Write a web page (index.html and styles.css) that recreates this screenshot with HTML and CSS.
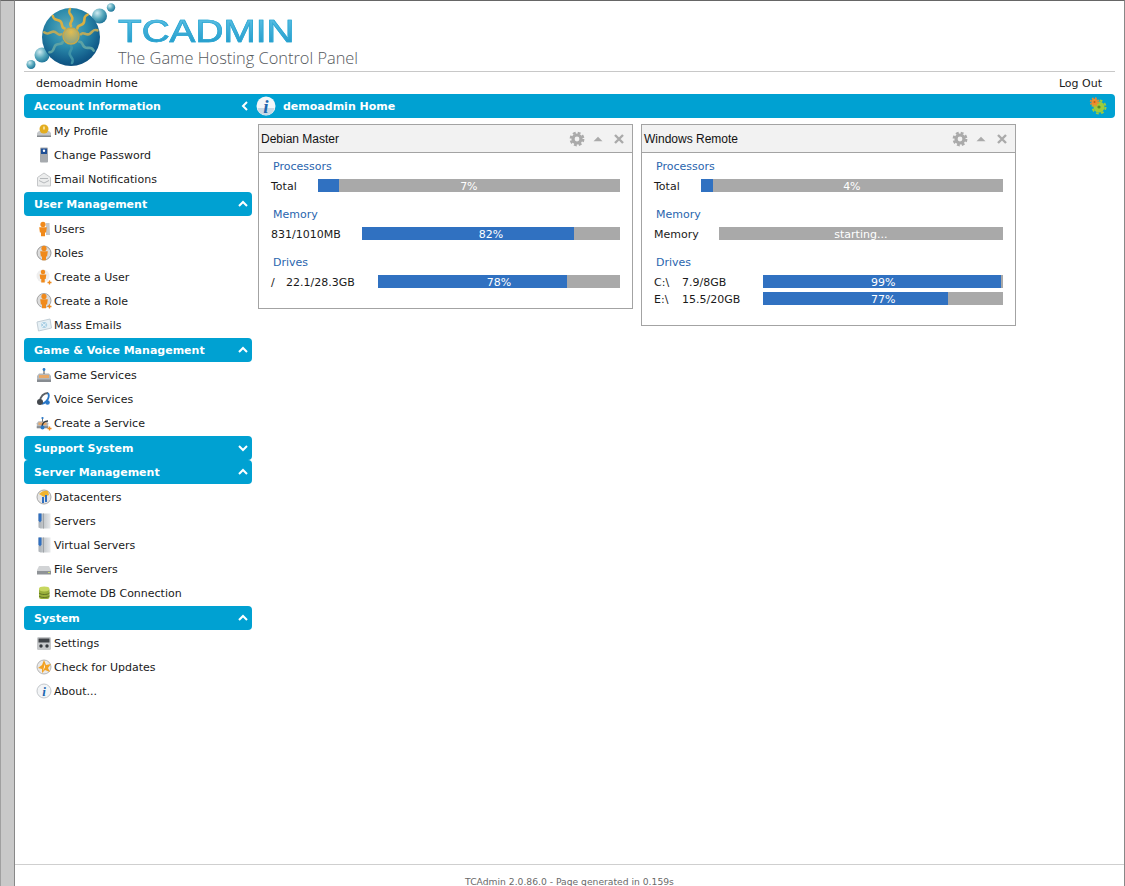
FILE: index.html
```html
<!DOCTYPE html>
<html lang="en">
<head>
<meta charset="utf-8">
<title>demoadmin Home</title>
<link rel="stylesheet" href="styles.css">
</head>
<body>
<svg class="defs" width="0" height="0" aria-hidden="true">
  <defs>
    <radialGradient id="sphere" cx="45%" cy="35%" r="72%">
      <stop offset="0" stop-color="#62aebc"/>
      <stop offset=".45" stop-color="#2b8aab"/>
      <stop offset=".8" stop-color="#125c8a"/>
      <stop offset="1" stop-color="#0a4674"/>
    </radialGradient>
    <radialGradient id="bubble" cx="35%" cy="30%" r="80%">
      <stop offset="0" stop-color="#cfeaf0"/>
      <stop offset=".5" stop-color="#57a8bc"/>
      <stop offset="1" stop-color="#136a92"/>
    </radialGradient>
    <radialGradient id="sun" cx="50%" cy="25%" r="80%">
      <stop offset="0" stop-color="#e2bd50"/>
      <stop offset="1" stop-color="#7fa08a"/>
    </radialGradient>
    <linearGradient id="tower" x1="0" x2="1">
      <stop offset="0" stop-color="#aab0b5"/>
      <stop offset="1" stop-color="#e8eaec"/>
    </linearGradient>
    <path id="ray" d="M0-10c-3-3 3-5 1-9s-4-4-2-8" fill="none" stroke-width="2.600" stroke-linecap="round"/>
    <symbol id="person" viewBox="0 0 16 16">
      <circle cx="8" cy="3.400" r="2.600" fill="#f08a1c"/>
      <path d="M4.200 6.200h7.600l-.7 5.300H10v3.800H6v-3.800H4.900z" fill="#f08a1c"/>
    </symbol>
    <symbol id="plus" viewBox="0 0 16 16">
      <path d="M11.500 13.500h4M13.500 11.500v4" stroke="#f08a1c" stroke-width="1.300" fill="none"/>
    </symbol>
    <symbol id="console" viewBox="0 0 16 16">
      <path d="M1 9 3 6.500h10L15 9v6H1z" fill="#b4b8bc"/>
      <rect x="3" y="8" width="10" height="3" fill="#e8a868"/>
      <rect x="1" y="12.500" width="14" height="2.500" fill="#878c91"/>
      <path d="M8 7V3" stroke="#555" stroke-width="1"/>
      <circle cx="8" cy="2.500" r="1.400" fill="#2a78c8"/>
    </symbol>
    <symbol id="server" viewBox="0 0 16 16">
      <path d="M2.500.5h12v15H4.500l-2-1z" fill="url(#tower)"/>
      <path d="M2.500.5h3v7L4 9.500 2.500 7.500z" fill="#2f6fc0"/>
      <path d="M7.500.5v15" stroke="#a0a4a8" stroke-width="1"/>
    </symbol>
  </defs>
</svg>

<div class="frame">
  <div class="strip"></div>
  <div class="page">
    <div class="wrap">
      <header class="masthead">
        <svg class="logo" width="94" height="70" viewBox="0 0 94 70" aria-hidden="true">
          <circle cx="75.500" cy="15" r="7.500" fill="url(#bubble)"/>
          <circle cx="87" cy="6.500" r="4.200" fill="url(#bubble)"/>
          <circle cx="18" cy="54" r="7.500" fill="url(#bubble)"/>
          <circle cx="7" cy="63.500" r="4.500" fill="url(#bubble)"/>
          <circle cx="47" cy="36" r="29" fill="url(#sphere)"/>
          <g transform="translate(47 35)">
            <use href="#ray" stroke="#d8b044"/>
            <use href="#ray" stroke="#d8b044" transform="rotate(40)"/>
            <use href="#ray" stroke="#b9a95c" transform="rotate(80)"/>
            <use href="#ray" stroke="#5ea2a4" transform="rotate(125)"/>
            <use href="#ray" stroke="#3f93a8" transform="rotate(180)"/>
            <use href="#ray" stroke="#5ea2a4" transform="rotate(235)"/>
            <use href="#ray" stroke="#b9a95c" transform="rotate(280)"/>
            <use href="#ray" stroke="#d8b044" transform="rotate(320)"/>
          </g>
          <circle cx="47" cy="35" r="8" fill="url(#sun)" stroke="#c8a848" stroke-width="1.400"/>
        </svg>
        <div class="brand">
          <div class="brand-name">TCADMIN</div>
          <div class="brand-tag">The Game Hosting Control Panel</div>
        </div>
      </header>

      <div class="crumbs">
        <span>demoadmin Home</span>
        <a class="logout">Log Out</a>
      </div>

      <div class="layout">
        <nav class="sidebar">
          <div class="section-head first">Account Information
            <svg class="chev" width="10" height="10" viewBox="0 0 10 10"><path d="M7 1 3 5l4 4" class="chev-line"/></svg>
          </div>
          <ul class="items">
            <li><svg class="ico" viewBox="0 0 16 16"><path d="M1 10 3 8h10l2 2v4H1z" fill="#c3c6c9"/><rect x="1" y="12.500" width="14" height="1.500" fill="#85898d"/><circle cx="8" cy="6" r="4.500" fill="#e3ad20"/><path d="M8 3.500v3" stroke="#fff3c0" stroke-width="1.400"/></svg>My Profile</li>
            <li><svg class="ico" viewBox="0 0 16 16"><rect x="4" y=".5" width="8" height="15" rx="1" fill="#a6aaae"/><rect x="5" y="1.500" width="6" height="5.500" fill="#1e4f96"/><circle cx="8" cy="3.800" r="1.200" fill="#fff"/></svg>Change Password</li>
            <li><svg class="ico" viewBox="0 0 16 16"><path d="M1.500 6.500 8 2l6.500 4.500V15h-13z" fill="#eceded" stroke="#c5c7c9"/><path d="M3 9.500 8 12l5-2.500M4 7.500h8" stroke="#b5b8bb" fill="none"/></svg>Email Notifications</li>
          </ul>

          <div class="section-head">User Management
            <svg class="chev" width="10" height="10" viewBox="0 0 10 10"><path d="M1 7l4-4 4 4" class="chev-line"/></svg>
          </div>
          <ul class="items">
            <li><svg class="ico" viewBox="0 0 16 16"><path d="M10 2h3.500l.5 12h-4z" fill="#c5c8cb"/><use href="#person" width="16" height="16" x="-1"/></svg>Users</li>
            <li><svg class="ico" viewBox="0 0 16 16"><circle cx="8" cy="8" r="7" fill="#dcdcdc" stroke="#9a9a9a"/><use href="#person" width="16" height="16"/></svg>Roles</li>
            <li><svg class="ico" viewBox="0 0 16 16"><circle cx="7" cy="7" r="6.500" fill="#eeeeee"/><use href="#person" width="14" height="14"/><use href="#plus" width="16" height="16"/></svg>Create a User</li>
            <li><svg class="ico" viewBox="0 0 16 16"><circle cx="8" cy="7.500" r="7" fill="#dcdcdc" stroke="#a5a5a5"/><use href="#person" width="16" height="16"/><use href="#plus" width="16" height="16"/></svg>Create a Role</li>
            <li><svg class="ico" viewBox="0 0 16 16"><path d="M1 5 14 2l1.500 9L2.500 14z" fill="#e6f0f5" stroke="#c2ced6"/><circle cx="8.200" cy="8" r="3" fill="#a9cfe4"/><path d="M6 6l4.500 4M10.500 6 6 10" stroke="#eef6fa"/></svg>Mass Emails</li>
          </ul>

          <div class="section-head">Game &amp; Voice Management
            <svg class="chev" width="10" height="10" viewBox="0 0 10 10"><path d="M1 7l4-4 4 4" class="chev-line"/></svg>
          </div>
          <ul class="items">
            <li><svg class="ico"><use href="#console" width="16" height="16"/></svg>Game Services</li>
            <li><svg class="ico" viewBox="0 0 16 16"><path d="M4 11c0-6 4-9 8-9" fill="none" stroke="#5c6166" stroke-width="1.800"/><path d="M12 2c2 3 0 9-6 11" fill="none" stroke="#2a78c8" stroke-width="1.800"/><circle cx="4" cy="11" r="3" fill="#44494e"/><circle cx="11.500" cy="11.500" r="2.300" fill="#2a78c8"/></svg>Voice Services</li>
            <li><svg class="ico" viewBox="0 0 16 16"><use href="#console" width="13" height="13" y="1"/><path d="M6 12c0-4 3-6 6-6" fill="none" stroke="#33383d" stroke-width="1.600"/><circle cx="6.500" cy="12.500" r="2" fill="#2a78c8"/><use href="#plus" width="16" height="16"/></svg>Create a Service</li>
          </ul>

          <div class="section-head">Support System
            <svg class="chev" width="10" height="10" viewBox="0 0 10 10"><path d="M1 3l4 4 4-4" class="chev-line"/></svg>
          </div>
          <div class="section-head">Server Management
            <svg class="chev" width="10" height="10" viewBox="0 0 10 10"><path d="M1 7l4-4 4 4" class="chev-line"/></svg>
          </div>
          <ul class="items">
            <li><svg class="ico" viewBox="0 0 16 16"><circle cx="8" cy="8" r="7" fill="#e4e4e4" stroke="#a8a8a8"/><path d="M3 5c3-3 6-4 9-3l1 4-5 2z" fill="#efb32e"/><path d="M6 8h2v6H6zM9 6h2v7H9z" fill="#2f6fc0"/></svg>Datacenters</li>
            <li><svg class="ico"><use href="#server" width="16" height="16"/></svg>Servers</li>
            <li><svg class="ico"><use href="#server" width="16" height="16"/></svg>Virtual Servers</li>
            <li><svg class="ico" viewBox="0 0 16 16"><path d="M3 5h10l2 4v4H1V9z" fill="#d2d4d6"/><rect x="1" y="10" width="14" height="3.500" fill="#8f9397"/><rect x="12" y="11" width="2" height="1" fill="#cfe06a"/></svg>File Servers</li>
            <li><svg class="ico" viewBox="0 0 16 16"><rect x="3" y="3" width="10.500" height="11" rx="2" fill="#9ab03a"/><ellipse cx="8.200" cy="4" rx="5.200" ry="2.400" fill="#c7d75f"/><path d="M3 8c2 2 8.500 2 10.500 0M3 11c2 2 8.500 2 10.500 0" stroke="#5f7222" fill="none"/></svg>Remote DB Connection</li>
          </ul>

          <div class="section-head">System
            <svg class="chev" width="10" height="10" viewBox="0 0 10 10"><path d="M1 7l4-4 4 4" class="chev-line"/></svg>
          </div>
          <ul class="items">
            <li><svg class="ico" viewBox="0 0 16 16"><rect x="1" y="2" width="14" height="13" rx="1.500" fill="#c6c8ca"/><rect x="2.500" y="3.500" width="11" height="4" fill="#3f4347"/><circle cx="5" cy="11" r="1.700" fill="#35393d"/><circle cx="11" cy="11" r="1.700" fill="#35393d"/></svg>Settings</li>
            <li><svg class="ico" viewBox="0 0 16 16"><circle cx="8" cy="8" r="7" fill="#e9e9e9" stroke="#b5b5b5"/><path d="M8 1 10 6l5-1-3 4 2 4-5-2-3 3V10L2 9l4-3z" fill="#f2a122"/><path d="M8 5l1 3-2 4 1-4z" fill="#fff"/></svg>Check for Updates</li>
            <li><svg class="ico" viewBox="0 0 16 16"><circle cx="8" cy="8" r="7" fill="#f2f4f6" stroke="#c4c8cc"/><text class="ico-i" x="8" y="12.500" text-anchor="middle">i</text></svg>About...</li>
          </ul>
        </nav>

        <main class="content">
          <div class="page-bar">
            <svg class="info" width="22" height="22" viewBox="0 0 22 22"><circle cx="11" cy="11" r="9.500" fill="#f4f7f9"/><path d="M2.500 13a8.600 8.600 0 0 0 17 0z" fill="#c8d8e4"/><text class="info-i" x="11" y="17.500" text-anchor="middle">i</text></svg>
            <span class="page-title">demoadmin Home</span>
            <svg class="puzzle" width="20" height="20" viewBox="0 0 20 20">
              <circle cx="11" cy="11" r="5.500" fill="#9ccc3c"/>
              <circle cx="11" cy="11" r="6.500" fill="none" stroke="#9ccc3c" stroke-width="2" stroke-dasharray="2.700 2.400"/>
              <circle cx="11" cy="11" r="1.600" fill="#5d8a2a"/>
              <circle cx="6.500" cy="6" r="3.200" fill="#f08a2c"/>
              <circle cx="6.500" cy="6" r="4" fill="none" stroke="#f08a2c" stroke-width="1.400" stroke-dasharray="1.800 1.340"/>
              <circle cx="6.500" cy="6" r="1" fill="#b8621a"/>
            </svg>
          </div>

          <div class="widgets">
            <section class="widget">
              <div class="widget-head">
                <span class="widget-title">Debian Master</span>
                <svg class="tool" width="16" height="16" viewBox="0 0 16 16"><circle cx="8" cy="8" r="4" class="gear-ring"/><circle cx="8" cy="8" r="6.200" class="gear-teeth"/></svg>
                <svg class="tool tri" width="12" height="16" viewBox="0 0 12 16"><path d="M1.500 10.200 6 5.800l4.500 4.400z" fill="#aaa"/></svg>
                <svg class="tool close" width="12" height="16" viewBox="0 0 12 16"><path d="M2 4l8 8M10 4l-8 8" class="x-line"/></svg>
              </div>
              <div class="widget-body">
                <h3 class="group">Processors</h3>
                <div class="row"><span class="label">Total</span><div class="bar"><div class="fill" style="width:7%"></div><span class="pct">7%</span></div></div>
                <h3 class="group">Memory</h3>
                <div class="row"><span class="label">831/1010MB</span><div class="bar"><div class="fill" style="width:82%"></div><span class="pct">82%</span></div></div>
                <h3 class="group">Drives</h3>
                <div class="drives drives-unix">
                  <span>/</span><span class="label">22.1/28.3GB</span><div class="bar"><div class="fill" style="width:78%"></div><span class="pct">78%</span></div>
                </div>
              </div>
            </section>

            <section class="widget">
              <div class="widget-head">
                <span class="widget-title">Windows Remote</span>
                <svg class="tool" width="16" height="16" viewBox="0 0 16 16"><circle cx="8" cy="8" r="4" class="gear-ring"/><circle cx="8" cy="8" r="6.200" class="gear-teeth"/></svg>
                <svg class="tool tri" width="12" height="16" viewBox="0 0 12 16"><path d="M1.500 10.200 6 5.800l4.500 4.400z" fill="#aaa"/></svg>
                <svg class="tool close" width="12" height="16" viewBox="0 0 12 16"><path d="M2 4l8 8M10 4l-8 8" class="x-line"/></svg>
              </div>
              <div class="widget-body">
                <h3 class="group">Processors</h3>
                <div class="row"><span class="label">Total</span><div class="bar"><div class="fill" style="width:4%"></div><span class="pct">4%</span></div></div>
                <h3 class="group">Memory</h3>
                <div class="row"><span class="label tight">Memory</span><div class="bar"><span class="pct">starting...</span></div></div>
                <h3 class="group">Drives</h3>
                <div class="drives drives-win">
                  <span>C:\</span><span class="label">7.9/8GB</span><div class="bar"><div class="fill" style="width:99%"></div><span class="pct">99%</span></div>
                  <span>E:\</span><span class="label">15.5/20GB</span><div class="bar"><div class="fill" style="width:77%"></div><span class="pct">77%</span></div>
                </div>
              </div>
            </section>
          </div>
        </main>
      </div>
    </div>
    <footer class="footer">TCAdmin 2.0.86.0 - Page generated in 0.159s</footer>
  </div>
</div>
</body>
</html>
```
FILE: styles.css
```css
* { box-sizing: border-box; }
html, body { margin: 0; height: 100%; overflow: hidden; }
body {
  font-family: "DejaVu Sans", Verdana, sans-serif;
  font-size: 11px;
  color: #1a1a1a;
  background: #fff;
}
.defs { position: absolute; }
.frame { display: flex; height: 886px; }
.strip {
  width: 15px;
  flex: none;
  background: #c9c9c9;
  border-left: 1px solid #a0a0a0;
  border-right: 1px solid #888;
  border-top: 1px solid #666;
}
.page {
  flex: 1;
  min-width: 0;
  display: flex;
  flex-direction: column;
  border-top: 1px solid #666;
  border-right: 1px solid #888;
}
.wrap { flex: 1; padding: 0 9px; }

/* masthead */
.masthead {
  display: flex;
  height: 71px;
  border-bottom: 1px solid #c8c8c8;
}
.logo { flex: none; }
.brand { padding-top: 14px; }
.brand-name {
  font-family: "Liberation Sans", Arial, sans-serif;
  font-size: 32px;
  line-height: 32px;
  height: 32px;
  width: 144px;
  transform: scaleX(1.21);
  transform-origin: left center;
  background: linear-gradient(#62c3e6, #1c97c8);
  -webkit-background-clip: text;
  background-clip: text;
  color: transparent;
  -webkit-text-stroke: 0.7px #2fa9d4;
}
.brand-tag {
  font-family: "Open Sans", sans-serif;
  font-weight: 300;
  font-size: 16.400px;
  line-height: 20px;
  margin-top: 1px;
  height: 19px;
  color: #55595d;
  white-space: nowrap;
}

/* breadcrumb row */
.crumbs {
  display: flex;
  justify-content: space-between;
  align-items: center;
  height: 22px;
  padding: 1px 13px 0 12px;
}

/* layout */
.layout { display: flex; align-items: flex-start; }
.sidebar { width: 228px; flex: none; }
.content { flex: 1; min-width: 0; }

.section-head {
  display: flex;
  justify-content: space-between;
  align-items: center;
  height: 24px;
  padding: 0 3px 0 10px;
  background: #00a1d2;
  border-radius: 4px;
  color: #fff;
  font-weight: bold;
}
.section-head.first { border-radius: 4px 0 0 4px; padding-right: 1px; }
.chev { flex: none; margin-right: 1px; }
.chev-line { fill: none; stroke: #fff; stroke-width: 2; }

.items { list-style: none; margin: 0; padding: 1px 0; }
.items li {
  display: flex;
  align-items: center;
  gap: 2px;
  height: 24px;
  padding-left: 12px;
}
.ico { width: 16px; height: 16px; flex: none; }
.ico-i, .info-i {
  font-family: "Liberation Serif", serif;
  font-style: italic;
  font-weight: bold;
  fill: #1c67b0;
}
.ico-i { font-size: 13px; }
.info-i { font-size: 19px; }

/* page bar */
.page-bar {
  display: flex;
  align-items: center;
  height: 24px;
  padding: 0 7px 0 3px;
  background: #00a1d2;
  border-radius: 0 4px 4px 0;
}
.info { flex: none; }
.page-title {
  flex: 1;
  margin-left: 6px;
  color: #fff;
  font-weight: bold;
}
.puzzle { flex: none; }

/* widgets */
.widgets {
  display: flex;
  align-items: flex-start;
  gap: 8px;
  padding: 6px 0 0 6px;
}
.widget {
  width: 375px;
  border: 1px solid #a3a3a3;
}
.widget-head {
  display: flex;
  align-items: center;
  height: 28px;
  padding: 0 7px 0 2px;
  background: #f2f2f2;
  border-bottom: 1px solid #a3a3a3;
}
.widget-title {
  flex: 1;
  font-family: "Liberation Sans", Arial, sans-serif;
  font-size: 12px;
  color: #111;
}
.tool { flex: none; margin-left: 7px; }
.tool.close { margin-left: 9px; }
.gear-ring { fill: none; stroke: #aaa; stroke-width: 3.200; }
.gear-teeth { fill: none; stroke: #aaa; stroke-width: 2.400; stroke-dasharray: 2.800 2.070; }
.x-line { fill: none; stroke: #aaa; stroke-width: 2.400; }

.widget-body { padding: 6px 12px 20px; }
.group {
  margin: 0 0 4px 2px;
  font-size: 11px;
  font-weight: normal;
  line-height: 16px;
  color: #2a65ae;
}
.row {
  display: flex;
  align-items: center;
  margin-bottom: 15px;
}
.label,
.drives > span {
  display: block;
  height: 13px;
  line-height: 15px;
}
.row .label { padding-right: 21px; flex: none; }
.row .label.tight { padding-right: 20px; }
.bar {
  position: relative;
  flex: 1;
  height: 13px;
  background: #a9a9a9;
  color: #fff;
  text-align: center;
  line-height: 15px;
  min-width: 0;
}
.fill {
  position: absolute;
  left: 0;
  top: 0;
  bottom: 0;
  background: #3071c1;
}
.pct { position: relative; }

.drives {
  display: grid;
  align-items: center;
  row-gap: 4px;
}
.drives .label { padding-right: 23px; }
.drives-unix { grid-template-columns: 15px auto 1fr; }
.drives-win { grid-template-columns: 28px auto 1fr; }

/* footer */
.footer {
  flex: none;
  height: 22px;
  padding-top: 11px;
  border-top: 1px solid #cfcfcf;
  text-align: center;
  font-size: 9.200px;
  line-height: 12px;
  color: #6a6a6a;
}
```
